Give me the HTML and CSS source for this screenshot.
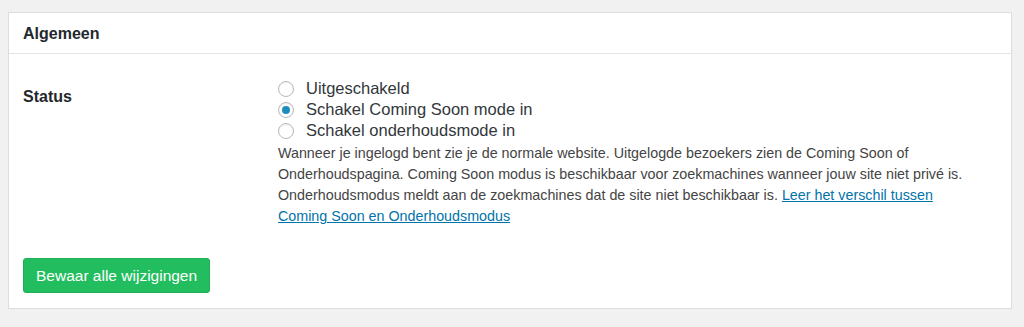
FILE: index.html
```html
<!DOCTYPE html>
<html lang="nl">
  <head>
    <meta charset="UTF-8" />
    <meta name="viewport" content="width=device-width, initial-scale=1.0" />
    <title>Algemeen</title>
    <link rel="stylesheet" href="styles.css">
  </head>
  <body>
    <div class="postbox">
      <!-- Box header -->
      <h2 class="postbox-title">Algemeen</h2>
      <div class="postbox-inside">
        <div class="form-row">
          <div class="form-label">Status</div>
          <div class="form-field">
            <label class="radio-row">
              <input type="radio" name="status" value="off" />
              <span>Uitgeschakeld</span>
            </label>
            <label class="radio-row">
              <input type="radio" name="status" value="coming-soon" checked />
              <span>Schakel Coming Soon mode in</span>
            </label>
            <label class="radio-row">
              <input type="radio" name="status" value="maintenance" />
              <span>Schakel onderhoudsmode in</span>
            </label>
            <p class="description">
              Wanneer je ingelogd bent zie je de normale website. Uitgelogde bezoekers zien de Coming Soon of
              Onderhoudspagina. Coming Soon modus is beschikbaar voor zoekmachines wanneer jouw site niet privé is.
              Onderhoudsmodus meldt aan de zoekmachines dat de site niet beschikbaar is.
              <a href="#">Leer het verschil tussen Coming Soon en Onderhoudsmodus</a>
            </p>
          </div>
        </div>
        <div class="form-actions">
          <button class="btn-save">Bewaar alle wijzigingen</button>
        </div>
      </div>
    </div>
  </body>
</html>
```

FILE: styles.css
```css
* {
  margin: 0;
  padding: 0;
  box-sizing: border-box;
}

body {
  font-family: "Liberation Sans", Arial, sans-serif;
  background-color: #f1f1f1;
  color: #23282d;
  padding: 12px 12px 0 8px;
}

.postbox {
  background-color: #fff;
  border: 1px solid #dcdddf;
  box-shadow: 0 1px 1px rgba(0, 0, 0, 0.04);
}

.postbox-title {
  height: 41px;
  padding: 0 14px;
  font-size: 16px;
  font-weight: 700;
  line-height: 41px;
  border-bottom: 1px solid #e2e4e7;
}

.postbox-inside {
  padding: 24px 14px 15px;
}

.form-row {
  display: grid;
  grid-template-columns: 255px 1fr;
}

.form-label {
  font-size: 16px;
  font-weight: 700;
  padding-top: 10px;
}

.form-field {
  width: 690px;
}

.radio-row {
  display: flex;
  align-items: center;
  height: 21px;
  font-size: 16.5px;
  color: #32373c;
}

.radio-row input[type="radio"] {
  appearance: none;
  flex-shrink: 0;
  width: 16px;
  height: 16px;
  margin-right: 12px;
  border: 1px solid #b4b9be;
  border-radius: 50%;
  background-color: #fff;
  box-shadow: inset 0 1px 2px rgba(0, 0, 0, 0.07);
  display: grid;
  place-items: center;
}

.radio-row input[type="radio"]:checked::before {
  content: "";
  width: 8px;
  height: 8px;
  border-radius: 50%;
  background-color: #1e8cbe;
}

.description {
  margin-top: 2px;
  font-size: 14.3px;
  line-height: 21px;
  color: #444;
}

.description a {
  color: #0073aa;
}

.form-actions {
  margin-top: 31px;
}

.btn-save {
  height: 35px;
  padding: 0 12px;
  font-family: inherit;
  font-size: 15.5px;
  color: #fff;
  background-color: #22bd5e;
  border: 1px solid #1fb057;
  border-radius: 3px;
  cursor: pointer;
}
```
